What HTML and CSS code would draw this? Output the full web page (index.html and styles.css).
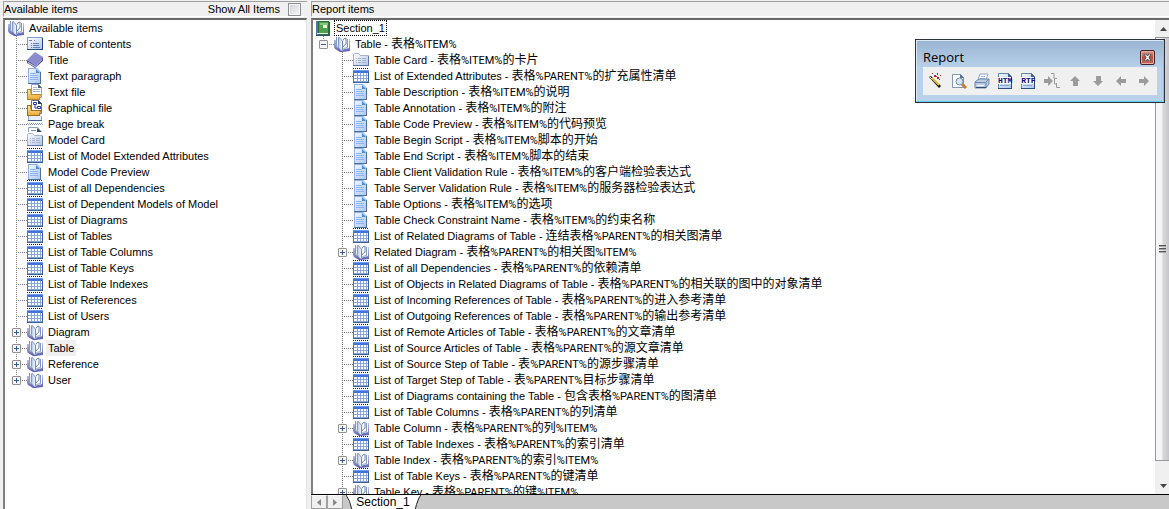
FILE: index.html
```html
<!DOCTYPE html>
<html lang="zh-CN">
<head>
  <meta charset="UTF-8" />
  <meta name="viewport" content="width=device-width, initial-scale=1.0"/>
  <title>Report Editor</title>
  <link rel="stylesheet" href="styles.css">
</head>
<body>
  <!-- icon set -->
  <svg class="sprite" aria-hidden="true">
    <linearGradient id="gPage" x1="0" y1="0" x2="1" y2="1"><stop offset="0" stop-color="#f4f9ff"/><stop offset="1" stop-color="#a9c6f5"/></linearGradient>
    <linearGradient id="gBook" x1="0" y1="0" x2="0" y2="1"><stop offset="0" stop-color="#b9c6e6"/><stop offset="1" stop-color="#5b5fae"/></linearGradient>
    <linearGradient id="gLeaf" x1="0" y1="0" x2="1" y2="0"><stop offset="0" stop-color="#a9bcdc"/><stop offset="1" stop-color="#f2f7fd"/></linearGradient>
    <linearGradient id="gCard" x1="0" y1="0" x2="1" y2="1"><stop offset="0" stop-color="#fff"/><stop offset="1" stop-color="#b4c4e6"/></linearGradient>
    <linearGradient id="gFold" x1="0" y1="0" x2="0" y2="1"><stop offset="0" stop-color="#ffe9a0"/><stop offset="1" stop-color="#e8ad3c"/></linearGradient>
    <symbol id="book" viewBox="0 0 16 16">
      <path d="M0 4h2l5 10 8-2V3h1v12l-8 1H6l-5-3-1-2z" fill="url(#gBook)"/>
      <path d="M2 1l2 1v10l-2-2z" fill="#e9f0fa"/>
      <path d="M4 1l2 1 2 3v10l-4-4z" fill="url(#gLeaf)"/>
      <path d="M8 5l2-3h3l1 1v9l-4 1-2 2z" fill="#f8fbff"/>
      <path d="M2.500 1v9l2 2M4.500 1.500v9M5 1.500q2 1 3 3.500M8 14q2-2 5.500-2.500V3" stroke="#8299c2" fill="none"/>
      <path d="M8.500 5v9M9 4.500q0-2 3-2.500v6q-2 1-3 3" stroke="#7088b5" fill="none"/>
    </symbol>
    <symbol id="toc" viewBox="0 0 16 16">
      <path d="M0 1h16v13H0z" fill="#7c9bd0"/><path d="M1 2h14v11H1z" fill="url(#gCard)"/>
      <path d="M0 13.500h16M15.500 2v12" stroke="#234a86"/>
      <path d="M2 4.500h3M7 4.500h1M4 7.500h1M6 7.500h6M4 9.500h1M6 9.500h6M4 11.500h1M6 11.500h7" stroke="#5c83c8"/>
    </symbol>
    <symbol id="title" viewBox="0 0 16 16">
      <path d="M0 8L8 0l8 5-8 8z" fill="#8d8bd0"/>
      <path d="M0 8l8 5 8-8v4l-8 7-8-5z" fill="#5350a0"/><path d="M1 10l7 4 7-7v1l-7 7-7-4z" fill="#d6dcf2"/>
    </symbol>
    <symbol id="page" viewBox="0 0 16 16">
      <path d="M1 0h9l4 4v12H1z" fill="#8fb0e6"/><path d="M2 1h8l3 3v11H2z" fill="url(#gPage)"/>
      <path d="M13.500 4v12M1 15.500h13" stroke="#4f6f9f"/><path d="M9 1l4 4H9z" fill="#3f91e0"/>
      <path d="M3 5.500h6M3 7.500h8M3 9.500h8M3 11.500h8" stroke="#8fb2f0"/>
    </symbol>
    <symbol id="textfile" viewBox="0 0 16 16">
      <path d="M4.500 0.500h7l3 3v10h-10z" fill="#fff" stroke="#8fa4c4"/><path d="M11 0l4 4h-4z" fill="#47617f"/>
      <path d="M6 3.500h4M6 5.500h7M6 7.500h7" stroke="#a8b8d0"/>
      <path d="M0 5h4l1 5h9l-1 6H0z" fill="#bb8420"/><path d="M1 6h2l1 5h9l-1 4H1z" fill="url(#gFold)"/>
    </symbol>
    <symbol id="graphfile" viewBox="0 0 16 16">
      <path d="M4.500 0.500h7l3 3v10h-10z" fill="#fff" stroke="#5a74a8"/><path d="M11 0l4 4h-4z" fill="#1f335c"/>
      <path d="M6.500 2.500h3v2h-3zM10.500 6.500h3v2h-3zM8 5v3h2" fill="none" stroke="#2439a0"/>
      <path d="M0 5h4l1 5h9l-1 6H0z" fill="#9f6f18"/><path d="M1 6h2l1 5h9l-1 4H1z" fill="url(#gFold)"/>
    </symbol>
    <symbol id="break" viewBox="0 0 16 16">
      <path d="M2 0h12v4H2z" fill="#e6eefb"/><path d="M1.500 0v4M14.500 0v4" stroke="#8fa6cc"/><path d="M1 4.500h14" stroke="#405f93"/>
      <path d="M0 7.500h16" stroke="#8195b5" stroke-dasharray="1 1"/><path d="M1 8.500h16" stroke="#8195b5" stroke-dasharray="1 1"/>
      <path d="M1.500 16v-4.500H11l3 4.500" fill="#fff" stroke="#8fa3c2"/><path d="M10 12l5 4h-5z" fill="#33496b"/><path d="M4 14.500h5" stroke="#8195b5"/>
    </symbol>
    <symbol id="card" viewBox="0 0 16 16">
      <path d="M0.500 2.500l1-1h4l2 2h8v10h-15z" fill="url(#gCard)" stroke="#a3b2cf"/>
      <path d="M0 13.500h16M15.500 4v10" stroke="#5d75a2"/>
      <path d="M3 6.500h1M5 6.500h3M9 6.500h4M3 8.500h1M5 8.500h3M9 8.500h4M3 10.500h1M5 10.500h3M9 10.500h4" stroke="#a5b5d2"/>
    </symbol>
    <symbol id="list" viewBox="0 0 16 16">
      <path d="M0 0.500h16" stroke="#222" stroke-dasharray="1 1"/><path d="M0 2h16v13H0z" fill="#3f74dc"/>
      <path d="M0 2h16v1H0z" fill="#6f9cf0"/>
      <path d="M1 5h14v9H1z" fill="#87a5dc"/>
      <path d="M1 6h14M1 9h14M1 12h14" stroke="#fff" stroke-width="2"/>
      <path d="M4.500 5v9M7.500 5v9M10.500 5v9M13.500 5v9" stroke="#87a5dc"/>
      <path d="M0 14.500h16M15.500 4v11" stroke="#3d5f98"/>
    </symbol>
    <symbol id="section" viewBox="0 0 16 16">
      <path d="M1 1h13v14H1z" fill="#2e6f38"/><path d="M1 1h2v14H1z" fill="#5273b5"/>
      <path d="M4 2h9v11H4z" fill="#4fa04e"/><path d="M5 3h8v2H5z" fill="#86c57c"/><path d="M8 5h4v3H8z" fill="#e6f4cf"/>
      <path d="M2 13.500h11" stroke="#e8eef5"/><path d="M14.500 2v14M1 15.500h14" stroke="#33507c"/>
    </symbol>
    <symbol id="wand" viewBox="0 0 16 16">
      <path d="M1 4l2-1 10 10-2 2z" fill="#111"/><path d="M4 5l7 7" stroke="#e7c53c" stroke-width="2"/><path d="M2 4l2 2" stroke="#fff"/>
      <path d="M6 2h2v2H6zM9 0h1v2H9zM9 4h2v2H9zM12 2h1v1h-1zM4 0h1v1H4zM11 6h1v1h-1zM8 3h1v1H8z" fill="#b3202c"/>
    </symbol>
    <symbol id="preview" viewBox="0 0 16 16">
      <path d="M1.500 1.500h8l3 3v10h-11z" fill="#fff" stroke="#8096b8"/><path d="M9 1l4 4H9z" fill="#526f99"/>
      <path d="M11 11l4 4" stroke="#c87c25" stroke-width="3"/><circle cx="8.500" cy="8.500" r="3.500" fill="#d5e5f2" stroke="#6f8aa8"/>
    </symbol>
    <symbol id="print" viewBox="0 0 16 16">
      <path d="M6 1h8l-2 6H4z" fill="#fff" stroke="#8aa4ca"/><path d="M7 3.500h4M6 5.500h5" stroke="#a5bcdc"/>
      <path d="M1 9l4-3h10v5l-3 4H1z" fill="#bacbe4" stroke="#6f89b0"/><path d="M1 9.500h11v5M12 9l3-3" stroke="#6f89b0" fill="none"/>
      <path d="M3 12.500h7" stroke="#f4f8ff"/><path d="M2 14.500h10" stroke="#2f4c73"/>
    </symbol>
    <symbol id="doc" viewBox="0 0 16 16">
      <path d="M1.500 0.500h10l3 3v12h-13z" fill="url(#gPage)" stroke="#6584b0"/><path d="M11 0l4 4h-4z" fill="#3f5f8c"/>
      <path d="M3 12.500h9" stroke="#88a5ce"/><path d="M14.500 4v12M1 15.500h14" stroke="#304d7b"/>
      <path d="M1 4h13v7H1z" fill="#f6faff"/>
    </symbol>
    <symbol id="insert" viewBox="0 0 16 16">
      <path d="M0 6h4V3l5 5-5 5v-3H0z" fill="#9b9b9b"/>
      <path d="M7 0.500h3v5h3M10.500 5v6h2M12.500 10v4.500H16" fill="none" stroke="#9b9b9b"/>
    </symbol>
    <symbol id="up" viewBox="0 0 16 16"><path d="M8 3l5 5h-2v5H6V8H3z" fill="#9b9b9b"/></symbol>
    <symbol id="down" viewBox="0 0 16 16"><path d="M8 13l5-5h-2V3H6v5H3z" fill="#9b9b9b"/></symbol>
    <symbol id="left" viewBox="0 0 16 16"><path d="M3 8l5-5v3h5v4H8v3z" fill="#9b9b9b"/></symbol>
    <symbol id="right" viewBox="0 0 16 16"><path d="M13 8L8 3v3H3v4h5v3z" fill="#9b9b9b"/></symbol>
  </svg>

  <main class="workspace">
    <section class="panel available">
      <header class="panel-head">
        <span>Available items</span>
        <label class="show-all" for="showAll">Show All Items <input type="checkbox" id="showAll" /></label>
      </header>
      <div class="tree-box">
        <div class="tree">
          <div class="node"><svg><use href="#book"/></svg><span>Available items</span></div>
          <ul>
            <li class="node"><i class="stem"></i><svg><use href="#toc"/></svg><span>Table of contents</span></li>
            <li class="node"><i class="stem"></i><svg><use href="#title"/></svg><span>Title</span></li>
            <li class="node"><i class="stem"></i><svg><use href="#page"/></svg><span>Text paragraph</span></li>
            <li class="node"><i class="stem"></i><svg><use href="#textfile"/></svg><span>Text file</span></li>
            <li class="node"><i class="stem"></i><svg><use href="#graphfile"/></svg><span>Graphical file</span></li>
            <li class="node"><i class="stem"></i><svg><use href="#break"/></svg><span>Page break</span></li>
            <li class="node"><i class="stem"></i><svg><use href="#card"/></svg><span>Model Card</span></li>
            <li class="node"><i class="stem"></i><svg><use href="#list"/></svg><span>List of Model Extended Attributes</span></li>
            <li class="node"><i class="stem"></i><svg><use href="#page"/></svg><span>Model Code Preview</span></li>
            <li class="node"><i class="stem"></i><svg><use href="#list"/></svg><span>List of all Dependencies</span></li>
            <li class="node"><i class="stem"></i><svg><use href="#list"/></svg><span>List of Dependent Models of Model</span></li>
            <li class="node"><i class="stem"></i><svg><use href="#list"/></svg><span>List of Diagrams</span></li>
            <li class="node"><i class="stem"></i><svg><use href="#list"/></svg><span>List of Tables</span></li>
            <li class="node"><i class="stem"></i><svg><use href="#list"/></svg><span>List of Table Columns</span></li>
            <li class="node"><i class="stem"></i><svg><use href="#list"/></svg><span>List of Table Keys</span></li>
            <li class="node"><i class="stem"></i><svg><use href="#list"/></svg><span>List of Table Indexes</span></li>
            <li class="node"><i class="stem"></i><svg><use href="#list"/></svg><span>List of References</span></li>
            <li class="node"><i class="stem"></i><svg><use href="#list"/></svg><span>List of Users</span></li>
            <li class="node"><i class="stem"><button class="toggle plus" aria-label="Expand"></button></i><svg><use href="#book"/></svg><span>Diagram</span></li>
            <li class="node"><i class="stem"><button class="toggle plus" aria-label="Expand"></button></i><svg><use href="#book"/></svg><span class="selected">Table</span></li>
            <li class="node"><i class="stem"><button class="toggle plus" aria-label="Expand"></button></i><svg><use href="#book"/></svg><span>Reference</span></li>
            <li class="node"><i class="stem last"><button class="toggle plus" aria-label="Expand"></button></i><svg><use href="#book"/></svg><span>User</span></li>
          </ul>
        </div>
      </div>
    </section>

    <section class="panel report">
      <header class="panel-head"><span>Report items</span></header>
      <div class="tree-box">
        <div class="tree">
          <div class="node"><svg><use href="#section"/></svg><span class="focused">Section_1</span></div>
          <div class="node"><i class="stem last"><button class="toggle" aria-label="Collapse"></button></i><svg><use href="#book"/></svg><span>Table - <b>表格<var>%ITEM%</var></b></span></div>
          <ul class="level2">
            <li class="node"><i class="stem"></i><svg><use href="#card"/></svg><span>Table Card - <b>表格<var>%ITEM%</var>的卡片</b></span></li>
            <li class="node"><i class="stem"></i><svg><use href="#list"/></svg><span>List of Extended Attributes - <b>表格<var>%PARENT%</var>的扩充属性清单</b></span></li>
            <li class="node"><i class="stem"></i><svg><use href="#page"/></svg><span>Table Description - <b>表格<var>%ITEM%</var>的说明</b></span></li>
            <li class="node"><i class="stem"></i><svg><use href="#page"/></svg><span>Table Annotation - <b>表格<var>%ITEM%</var>的附注</b></span></li>
            <li class="node"><i class="stem"></i><svg><use href="#page"/></svg><span>Table Code Preview - <b>表格<var>%ITEM%</var>的代码预览</b></span></li>
            <li class="node"><i class="stem"></i><svg><use href="#page"/></svg><span>Table Begin Script - <b>表格<var>%ITEM%</var>脚本的开始</b></span></li>
            <li class="node"><i class="stem"></i><svg><use href="#page"/></svg><span>Table End Script - <b>表格<var>%ITEM%</var>脚本的结束</b></span></li>
            <li class="node"><i class="stem"></i><svg><use href="#page"/></svg><span>Table Client Validation Rule - <b>表格<var>%ITEM%</var>的客户端检验表达式</b></span></li>
            <li class="node"><i class="stem"></i><svg><use href="#page"/></svg><span>Table Server Validation Rule - <b>表格<var>%ITEM%</var>的服务器检验表达式</b></span></li>
            <li class="node"><i class="stem"></i><svg><use href="#page"/></svg><span>Table Options - <b>表格<var>%ITEM%</var>的选项</b></span></li>
            <li class="node"><i class="stem"></i><svg><use href="#page"/></svg><span>Table Check Constraint Name - <b>表格<var>%ITEM%</var>的约束名称</b></span></li>
            <li class="node"><i class="stem"></i><svg><use href="#list"/></svg><span>List of Related Diagrams of Table - <b>连结表格<var>%PARENT%</var>的相关图清单</b></span></li>
            <li class="node"><i class="stem"><button class="toggle plus" aria-label="Expand"></button></i><svg><use href="#book"/></svg><span>Related Diagram - <b>表格<var>%PARENT%</var>的相关图<var>%ITEM%</var></b></span></li>
            <li class="node"><i class="stem"></i><svg><use href="#list"/></svg><span>List of all Dependencies - <b>表格<var>%PARENT%</var>的依赖清单</b></span></li>
            <li class="node"><i class="stem"></i><svg><use href="#list"/></svg><span>List of Objects in Related Diagrams of Table - <b>表格<var>%PARENT%</var>的相关联的图中的对象清单</b></span></li>
            <li class="node"><i class="stem"></i><svg><use href="#list"/></svg><span>List of Incoming References of Table - <b>表格<var>%PARENT%</var>的进入参考清单</b></span></li>
            <li class="node"><i class="stem"></i><svg><use href="#list"/></svg><span>List of Outgoing References of Table - <b>表格<var>%PARENT%</var>的输出参考清单</b></span></li>
            <li class="node"><i class="stem"></i><svg><use href="#list"/></svg><span>List of Remote Articles of Table - <b>表格<var>%PARENT%</var>的文章清单</b></span></li>
            <li class="node"><i class="stem"></i><svg><use href="#list"/></svg><span>List of Source Articles of Table - <b>表格<var>%PARENT%</var>的源文章清单</b></span></li>
            <li class="node"><i class="stem"></i><svg><use href="#list"/></svg><span>List of Source Step of Table - <b>表<var>%PARENT%</var>的源步骤清单</b></span></li>
            <li class="node"><i class="stem"></i><svg><use href="#list"/></svg><span>List of Target Step of Table - <b>表<var>%PARENT%</var>目标步骤清单</b></span></li>
            <li class="node"><i class="stem"></i><svg><use href="#list"/></svg><span>List of Diagrams containing the Table - <b>包含表格<var>%PARENT%</var>的图清单</b></span></li>
            <li class="node"><i class="stem"></i><svg><use href="#list"/></svg><span>List of Table Columns - <b>表格<var>%PARENT%</var>的列清单</b></span></li>
            <li class="node"><i class="stem"><button class="toggle plus" aria-label="Expand"></button></i><svg><use href="#book"/></svg><span>Table Column - <b>表格<var>%PARENT%</var>的列<var>%ITEM%</var></b></span></li>
            <li class="node"><i class="stem"></i><svg><use href="#list"/></svg><span>List of Table Indexes - <b>表格<var>%PARENT%</var>的索引清单</b></span></li>
            <li class="node"><i class="stem"><button class="toggle plus" aria-label="Expand"></button></i><svg><use href="#book"/></svg><span>Table Index - <b>表格<var>%PARENT%</var>的索引<var>%ITEM%</var></b></span></li>
            <li class="node"><i class="stem"></i><svg><use href="#list"/></svg><span>List of Table Keys - <b>表格<var>%PARENT%</var>的键清单</b></span></li>
            <li class="node"><i class="stem"><button class="toggle plus" aria-label="Expand"></button></i><svg><use href="#book"/></svg><span>Table Key - <b>表格<var>%PARENT%</var>的键<var>%ITEM%</var></b></span></li>
          </ul>
        </div>
        <div class="scrollbar">
          <button class="scroll-btn" aria-label="Scroll up"><svg viewBox="0 0 7 4"><path d="M0 4l3.500-4L7 4z"/></svg></button>
          <div class="thumb"><i></i><i></i><i></i></div>
          <button class="scroll-btn end" aria-label="Scroll down"><svg viewBox="0 0 7 4"><path d="M0 0h7L3.500 4z"/></svg></button>
        </div>
      </div>
      <footer class="tabs">
        <button class="tab-nav" aria-label="Previous"><svg viewBox="0 0 4 7"><path d="M4 0v7L0 3.500z"/></svg></button>
        <button class="tab-nav" aria-label="Next"><svg viewBox="0 0 4 7"><path d="M0 0v7l4-3.500z"/></svg></button>
        <button class="tab">
          <svg viewBox="0 0 76 15" aria-hidden="true"><path d="M0 0h76q-3 3-6 15H7Q4 5 0 0z" fill="#fff"/><path d="M1 0q4 5 6 15M76 0q-3 3-6 15" fill="none" stroke="#222"/></svg>
          <span>Section_1</span>
        </button>
      </footer>
    </section>
  </main>

  <aside class="toolwin">
    <div class="toolwin-title">
      <span>Report</span>
      <button class="close" aria-label="Close"><svg viewBox="0 0 9 7"><path d="M1 0h2l1.500 2L6 0h2L6 3.500 8 7H6L4.500 5 3 7H1l2-3.500z" fill="#fff" stroke="#4d4d55"/></svg></button>
    </div>
    <div class="toolbar">
      <button aria-label="Wizard"><svg><use href="#wand"/></svg></button>
      <button aria-label="Print preview"><svg><use href="#preview"/></svg></button>
      <button aria-label="Print"><svg><use href="#print"/></svg></button>
      <button class="format"><svg><use href="#doc"/></svg><span>HTM</span></button>
      <button class="format"><svg><use href="#doc"/></svg><span>RTF</span></button>
      <button disabled aria-label="Add item"><svg><use href="#insert"/></svg></button>
      <button disabled aria-label="Move up"><svg><use href="#up"/></svg></button>
      <button disabled aria-label="Move down"><svg><use href="#down"/></svg></button>
      <button disabled aria-label="Move left"><svg><use href="#left"/></svg></button>
      <button disabled aria-label="Move right"><svg><use href="#right"/></svg></button>
    </div>
  </aside>
</body>
</html>
```

FILE: styles.css
```css
* {
  box-sizing: border-box;
}
body {
  margin: 0;
  height: 100vh;
  overflow: hidden;
  background: #f0f0f0;
  color: #000;
  font-family: "Liberation Sans", "Noto Sans CJK SC", sans-serif;
  font-size: 11px;
  line-height: 16px;
}
button {
  margin: 0;
  padding: 0;
  border: none;
  background: none;
  font: inherit;
}
ul {
  list-style: none;
  margin: 0;
  padding: 0;
}
.sprite {
  position: absolute;
  width: 0;
  height: 0;
}

/* panels */
.workspace {
  display: flex;
  gap: 4px;
  height: 100%;
  padding: 1px 0 0 3px;
}
.panel {
  display: flex;
  flex-direction: column;
  min-width: 0;
}
.available {
  flex: 0 0 304px;
}
.report {
  flex: 1;
}
.panel-head {
  display: flex;
  justify-content: space-between;
  height: 16px;
  margin-bottom: 1px;
  border-top: 1px solid #a0a0a0;
  border-left: 1px solid #a0a0a0;
  border-bottom: 1px solid #fff;
  line-height: 15px;
  white-space: nowrap;
}
.show-all {
  display: flex;
  align-items: center;
  gap: 8px;
  padding-right: 6px;
}
.show-all input {
  appearance: none;
  width: 13px;
  height: 13px;
  margin: 0;
  border: 1px solid #8e8f8f;
  background: linear-gradient(135deg, #cfd2d6, #f8f8f8);
  box-shadow: inset 0 0 0 1px #f4f4f4;
}
.tree-box {
  flex: 1;
  display: flex;
  min-height: 0;
  border-top: 2px solid #696969;
  border-left: 2px solid #808080;
  background: #fff;
}
.available .tree-box {
  border-right: 1px solid #e3e3e3;
}
.tree {
  flex: 1;
  min-width: 0;
  overflow: hidden;
  padding-left: 3px;
}
.report .tree {
  padding-left: 2px;
}

/* tree rows */
.node {
  display: flex;
  height: 16px;
  white-space: nowrap;
}
.node > svg {
  flex: none;
  width: 16px;
  height: 16px;
}
.node > span {
  margin-left: 3px;
  padding: 0 2px;
}
.node b {
  font-weight: normal;
  font-size: 12px;
}
.node var {
  font-family: Roboto, sans-serif;
  font-style: normal;
  font-size: 11px;
}
.level2 {
  padding-left: 19px;
}
.stem {
  flex: none;
  width: 19px;
  height: 16px;
  padding: 4px;
  background:
    repeating-linear-gradient(to bottom, #808080 0 1px, transparent 1px 2px) 8px 0 / 1px 16px no-repeat,
    repeating-linear-gradient(to right, #808080 0 1px, transparent 1px 2px) 8px 8px / 11px 1px no-repeat;
}
.stem.last {
  background-size: 1px 8px, 11px 1px;
}
.toggle {
  display: block;
  width: 9px;
  height: 9px;
  border: 1px solid #919191;
  border-radius: 1px;
  background: linear-gradient(#3b5a9a, #3b5a9a) center / 5px 1px no-repeat, #f6f6f6;
}
.toggle.plus {
  background:
    linear-gradient(#3b5a9a, #3b5a9a) center / 5px 1px no-repeat,
    linear-gradient(#3b5a9a, #3b5a9a) center / 1px 5px no-repeat,
    #f6f6f6;
}
.selected {
  background: #f0f0f0;
}
.focused {
  outline: 1px dotted #000;
  outline-offset: -1px;
}

/* scrollbar */
.scrollbar {
  flex: none;
  display: flex;
  flex-direction: column;
  width: 14px;
  background: #f0f0f0;
}
.scroll-btn {
  height: 17px;
  padding-left: 2px;
}
.scroll-btn.end {
  margin-top: 16px;
}
.scroll-btn svg {
  display: block;
  width: 7px;
  height: 4px;
  margin: 0 auto;
  fill: #444;
}
.thumb {
  flex: 1;
  display: flex;
  flex-direction: column;
  align-items: center;
  justify-content: center;
  gap: 1px;
  border: 1px solid #979797;
  border-right: none;
  background: linear-gradient(to right, #f6f6f6 0 40%, #d8d8dc 55%, #c4c4ca);
}
.thumb i {
  width: 7px;
  height: 2px;
  border-top: 1px solid #555;
  background: #aaa;
}

/* bottom tabs */
.tabs {
  display: flex;
  height: 15px;
  border-top: 1px solid #000;
  background: #c8c8c8;
  overflow: hidden;
}
.tab-nav {
  width: 16px;
  border: 1px solid #a0a0a0;
  border-top-color: #fff;
  background: #f0f0f0;
}
.tab-nav svg {
  display: block;
  width: 4px;
  height: 7px;
  margin: 0 auto;
  fill: #888;
}
.tab {
  display: grid;
  width: 76px;
  margin-left: 2px;
  font-size: 12px;
  line-height: 14px;
}
.tab svg,
.tab span {
  grid-area: 1 / 1;
}
.tab svg {
  width: 76px;
  height: 15px;
}

/* floating report toolbar */
.toolwin {
  position: absolute;
  top: 39px;
  right: 4px;
  padding: 7px;
  border: 1px solid #2e3338;
  background: linear-gradient(#99b4d1, #b9d1ea 28px);
  box-shadow: inset -1px -1px #5cd3ee, inset 1px 1px #dfeaf5;
}
.toolwin-title {
  display: flex;
  justify-content: space-between;
  align-items: center;
  height: 20px;
  padding-right: 2px;
  font-family: "Open Sans", sans-serif;
  font-size: 13px;
}
.close {
  width: 15px;
  height: 15px;
  border: 1px solid #43232b;
  border-radius: 2px;
  background: linear-gradient(#d99a8c, #b6503d 50%, #c66a55);
  box-shadow: inset 0 0 0 1px #e0b0a5;
}
.close svg {
  display: block;
  width: 9px;
  height: 7px;
  margin: 0 auto;
}
.toolbar {
  display: flex;
  width: 234px;
  height: 28px;
  padding: 0 1px;
  background: #f0f0f0;
}
.toolbar button {
  flex: 1;
  display: grid;
  place-items: center;
}
.toolbar svg {
  grid-area: 1 / 1;
  width: 16px;
  height: 16px;
}
.format span {
  grid-area: 1 / 1;
  color: #10107a;
  font-family: "Liberation Mono", monospace;
  font-size: 8px;
  font-weight: bold;
  line-height: 10px;
}
```
